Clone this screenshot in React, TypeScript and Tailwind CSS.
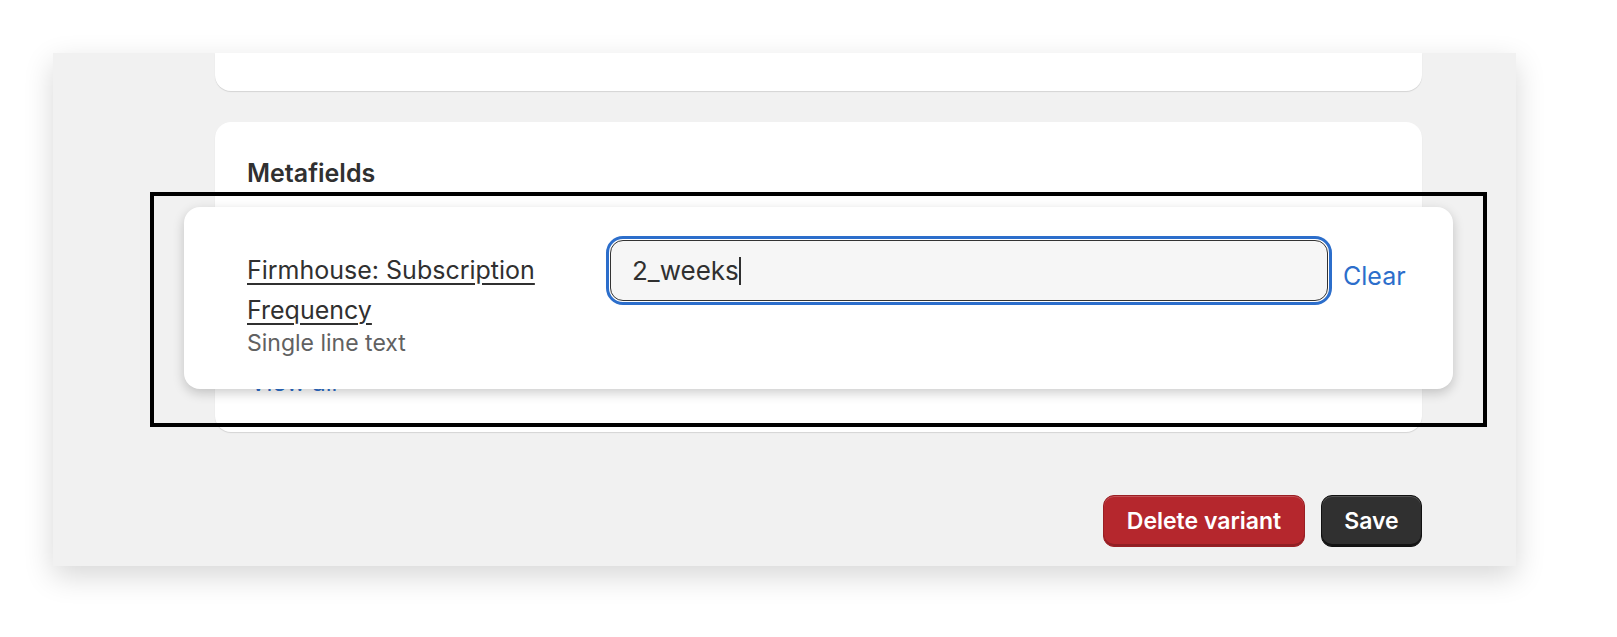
import React from "react";

export default function App() {
  return (
    <div className="w-[1617px] h-[637px] bg-white pt-[53px] pl-[53px] overflow-hidden font-['Inter','Noto_Sans',sans-serif] text-[#303030]">
      <div className="relative w-[1463px] h-[513px] bg-[#f1f1f1] shadow-[0_10px_28px_rgba(0,0,0,0.16)] flex flex-col pl-[162px] pr-[94px]">
        {/* top card (cut off) */}
        <div className="h-[38px] bg-white rounded-b-[16px] shadow-[0_1px_1px_rgba(0,0,0,0.12)]" />

        {/* Metafields card */}
        <div className="mt-[31px] h-[310px] bg-white rounded-[16px] shadow-[0_1px_1px_rgba(0,0,0,0.12)] px-[32px] pt-[37px] flex flex-col">
          <div className="text-[25px] leading-[28px] font-semibold">Metafields</div>
          <div className="flex-1" />
          <div className="mb-[35px] ml-[3px] text-[24px] leading-[28px] text-[#2c6ecb]">View all</div>
        </div>

        {/* footer buttons */}
        <div className="mt-auto mb-[19px] flex justify-end gap-[16px]">
          <button className="w-[202px] h-[52px] rounded-[11px] bg-[#b5272d] border border-[#9a1f24] shadow-[inset_0_-2px_0_rgba(0,0,0,0.2),inset_0_1px_0_rgba(255,255,255,0.2)] text-white text-[23px] font-semibold">
            Delete variant
          </button>
          <button className="w-[101px] h-[52px] rounded-[11px] bg-[#303030] border border-[#111] shadow-[inset_0_-2px_0_rgba(0,0,0,0.6),inset_0_1px_0_rgba(255,255,255,0.18)] text-white text-[23px] font-semibold">
            Save
          </button>
        </div>

        {/* highlighted popup */}
        <div className="absolute left-[131px] top-[154px] w-[1269px] h-[182px] bg-white rounded-[16px] shadow-[0_4px_12px_rgba(0,0,0,0.2)] flex items-start pl-[63px] pt-[29px]">
          <div className="w-[330px] shrink-0 mt-[14px]">
            <div className="text-[25px] leading-[40px] underline decoration-[1.5px] underline-offset-[4px] text-[#303030]">
              Firmhouse: Subscription Frequency
            </div>
            <div className="text-[23px] leading-[26px] text-[#616161]">Single line text</div>
          </div>
          <div className="ml-[29px] w-[726px] h-[69px] rounded-[17px] border-[3px] border-[#2c6ecb] bg-white p-[1px]">
            <div className="h-full rounded-[13px] border-[1.5px] border-[#333] bg-[#f6f6f6] pl-[21px] flex items-center">
              <span className="text-[26px] leading-[30px] text-[#303030]">2_weeks</span>
              <span className="w-[2.5px] h-[28px] bg-[#303030]" />
            </div>
          </div>
          <div className="ml-[11px] mt-[25px] text-[25px] leading-[30px] text-[#2c6ecb]">Clear</div>
        </div>

        {/* annotation rectangle */}
        <div className="absolute left-[97px] top-[139px] w-[1337px] h-[235px] border-[4px] border-black pointer-events-none" />
      </div>
    </div>
  );
}
